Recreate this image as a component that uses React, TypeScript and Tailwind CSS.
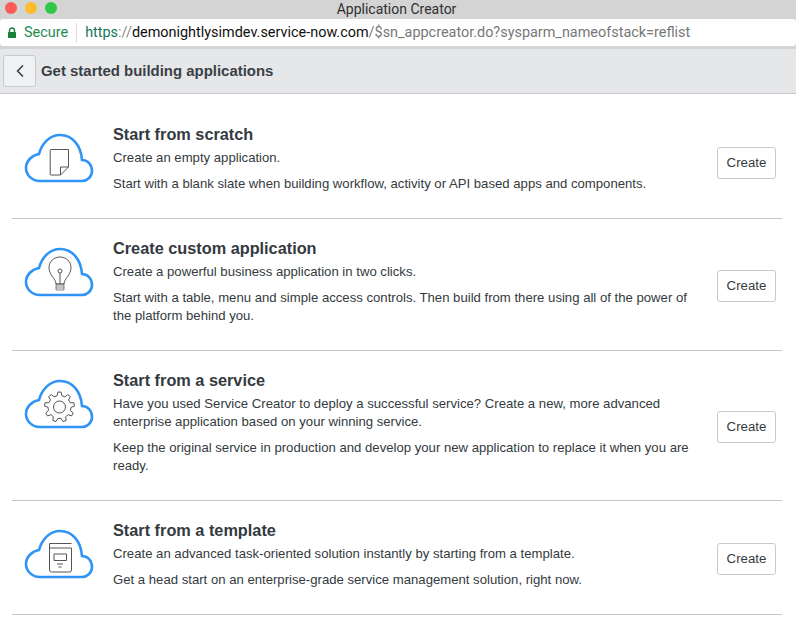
import { ReactNode } from 'react';
import { ChevronLeft } from 'lucide-react';

// gear outline for the "service" cloud
const gearPath = (() => {
  const cx = 35.5;
  const cy = 28;
  const teeth = 9;
  const pts: string[] = [];
  for (let i = 0; i < teeth; i++) {
    const a = (i / teeth) * Math.PI * 2 - Math.PI / 2;
    const step = (Math.PI * 2) / teeth;
    const add = (r: number, off: number) => {
      pts.push(`${(cx + r * Math.cos(a + off * step)).toFixed(2)} ${(cy + r * Math.sin(a + off * step)).toFixed(2)}`);
    };
    add(15, -0.16);
    add(15, 0.16);
    add(11.5, 0.3);
    add(11.5, 0.7);
  }
  return 'M' + pts.join(' L') + ' Z';
})();

const CloudIcon = ({ children }: { children: ReactNode }) => (
  <svg width="70" height="50" viewBox="0 0 70 50" fill="none" className="block">
    <path
      d="M16 48 C8 48 2 42 2 35 C2 28 8 22 15 21 C18 10 26 2 36 2 C48 2 57 12 58 27 C64 27 68 32 68 38 C68 44 63 48 58 48 Z"
      stroke="#2f94f5"
      strokeWidth="2.6"
    />
    <g stroke="#555" strokeWidth="1" strokeLinejoin="round">
      {children}
    </g>
  </svg>
);

const rows = [
  {
    title: 'Start from scratch',
    lines: ['Create an empty application.', 'Start with a blank slate when building workflow, activity or API based apps and components.'],
    icon: (
      <>
        <path d="M27 16.5 H44.5 V34 L36.5 42 H27 a0.8 0.8 0 0 1 -0.8 -0.8 V17.3 a0.8 0.8 0 0 1 0.8 -0.8 Z" />
        <path d="M44.5 34 H36.5 V42" />
      </>
    ),
  },
  {
    title: 'Create custom application',
    lines: [
      'Create a powerful business application in two clicks.',
      'Start with a table, menu and simple access controls. Then build from there using all of the power of the platform behind you.',
    ],
    icon: (
      <>
        <path d="M32 37 C32 32 25 28 25 20.5 C25 14.5 30 10 36 10 C42 10 47 14.5 47 20.5 C47 28 40 32 40 37 Z" />
        <circle cx="36" cy="24" r="2" />
        <path d="M36 26 V37" />
        <path d="M32 37 H40 V43 H32 Z M32 39 H40 M32 41 H40" strokeWidth="0.7" />
      </>
    ),
  },
  {
    title: 'Start from a service',
    lines: [
      'Have you used Service Creator to deploy a successful service? Create a new, more advanced enterprise application based on your winning service.',
      'Keep the original service in production and develop your new application to replace it when you are ready.',
    ],
    icon: (
      <>
        <path d={gearPath} />
        <circle cx="35.5" cy="28" r="6" />
      </>
    ),
  },
  {
    title: 'Start from a template',
    lines: [
      'Create an advanced task-oriented solution instantly by starting from a template.',
      'Get a head start on an enterprise-grade service management solution, right now.',
    ],
    icon: (
      <>
        <path d="M25.5 14.5 H47.5 M25.5 14.5 V41 a2 2 0 0 0 2 2 H45.5 a2 2 0 0 0 2 -2 V19 H25.5" />
        <rect x="30" y="25" width="12.5" height="6.5" />
        <path d="M33 35 H39 M34.5 38 H37.5" />
      </>
    ),
  },
];

export default function App() {
  return (
    <div className="h-[622px] w-[796px] overflow-hidden bg-white font-['Liberation_Sans',sans-serif]">
      {/* browser title bar */}
      <div className="relative flex h-[19px] items-center justify-center bg-[#d4d4d4] pr-[3px] text-[14px] text-[#2f2f2f] font-['Roboto',sans-serif]">
        <div className="absolute left-[5px] top-[2px] flex gap-2">
          <span className="h-3 w-3 rounded-full bg-[#fc5b57]" />
          <span className="h-3 w-3 rounded-full bg-[#fdbc2e]" />
          <span className="h-3 w-3 rounded-full bg-[#33c748]" />
        </div>
        Application Creator
      </div>
      {/* address bar */}
      <div className="bg-[#d4d4d4] pb-[3px]">
        <div className="flex h-[27px] items-center rounded-[3px] bg-white pt-px text-[14.43px] font-['Roboto',sans-serif]">
          <svg width="10" height="12" viewBox="0 0 10 12" className="ml-[7px]">
            <path d="M2.5 5 V3.5 a2.5 2.5 0 0 1 5 0 V5" fill="none" stroke="#188038" strokeWidth="1.4" />
            <rect x="1" y="5" width="8" height="6" rx="0.5" fill="#188038" />
          </svg>
          <span className="ml-[7px] text-[#1e8a4c]">Secure</span>
          <span className="ml-[8px] mr-[8px] h-[20px] w-px bg-[#dcdcdc]" />
          <span className="whitespace-nowrap">
            <span className="text-[#16775a]">https</span>
            <span className="text-[#8a8a8a]">://</span>
            <span className="text-[#111]">demonightlysimdev.service-now.com</span>
            <span className="text-[#777]">/$sn_appcreator.do?sysparm_nameofstack=reflist</span>
          </span>
        </div>
      </div>
      {/* page header */}
      <div className="flex h-[45px] items-center border-b border-[#c8c9cc] bg-[#e6e7e8] pl-[3px]">
        <button className="flex h-[32px] w-[33px] items-center justify-center rounded-[3px] border border-[#c8c9cc] bg-[#f0f1f2] text-[#3a3f47]">
          <ChevronLeft size={20} strokeWidth={2} />
        </button>
        <h1 className="ml-[5px] text-[14.95px] font-bold text-[#3a3f47]">Get started building applications</h1>
      </div>
      {/* options */}
      <div className="ml-3 mt-[11px] w-[770px]">
        {rows.map((row) => (
          <div key={row.title} className="flex items-center border-b border-[#c4c4c8] pt-[18px] pb-[25px]">
            <div className="ml-[12px] mt-[10px] w-[89px] shrink-0 self-start">
              <CloudIcon>{row.icon}</CloudIcon>
            </div>
            <div className="min-w-0 flex-1 pr-[20px] text-[13.15px] leading-[18px] text-[#343a40]">
              <h2 className="mb-[4px] text-[16.3px] font-bold leading-[22px] text-[#343a40]">{row.title}</h2>
              <p className="mb-[8px]">{row.lines[0]}</p>
              <p>{row.lines[1]}</p>
            </div>
            <button className="mr-[6px] mt-[9px] h-[32px] w-[59px] shrink-0 rounded-[3px] border border-[#c8c9cc] bg-white text-[13.25px] text-[#343a40]">
              Create
            </button>
          </div>
        ))}
      </div>
    </div>
  );
}
